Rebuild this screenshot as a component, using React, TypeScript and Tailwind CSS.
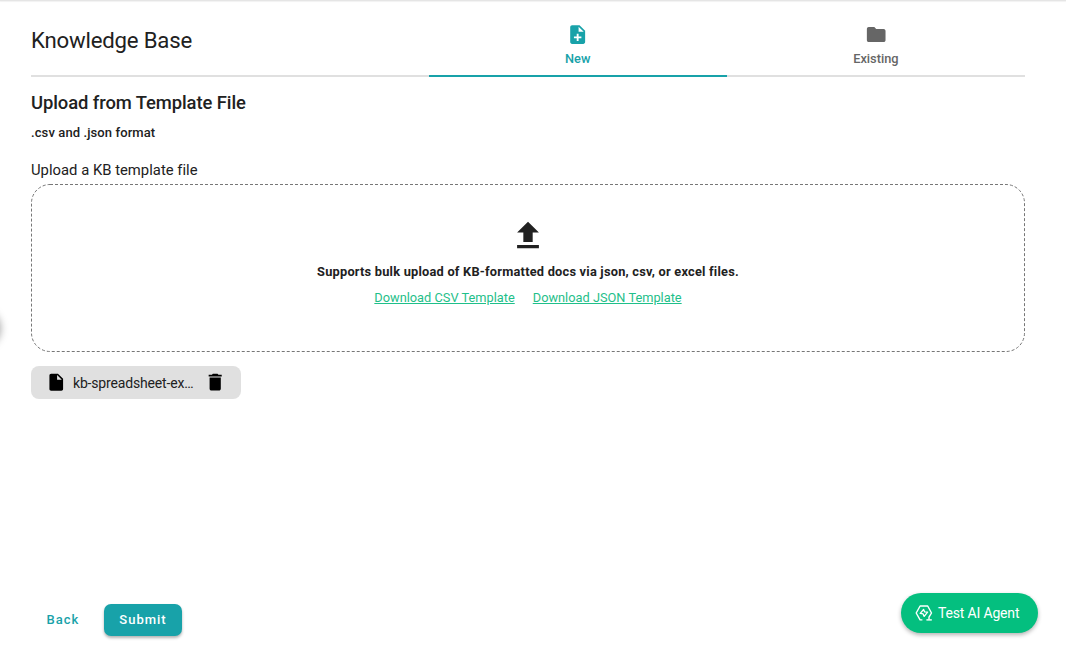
type IconProps = { d: string; className?: string; viewBox?: string };

const Icon = ({ d, className, viewBox = "0 0 24 24" }: IconProps) => (
  <svg viewBox={viewBox} fill="currentColor" className={className} aria-hidden="true">
    <path d={d} />
  </svg>
);

const filePlus =
  "M14 2H6C4.89 2 4 2.89 4 4V20C4 21.11 4.89 22 6 22H18C19.11 22 20 21.11 20 20V8L14 2M16 16H13V19H11V16H8V14H11V11H13V14H16V16M13 9V3.5L18.5 9H13Z";
const folder =
  "M10 4H4C2.89 4 2 4.89 2 6V18C2 19.1 2.9 20 4 20H20C21.1 20 22 19.1 22 18V8C22 6.89 21.1 6 20 6H12L10 4Z";
const upload = "M9 16V10H5L12 3L19 10H15V16H9M5 20V18H19V20H5Z";
const file =
  "M13 9V3.5L18.5 9M6 2C4.89 2 4 2.89 4 4V20C4 21.1 4.9 22 6 22H18C19.1 22 20 21.1 20 20V8L14 2H6Z";
const trash =
  "M19 4H15.5L14.5 3H9.5L8.5 4H5V6H19M6 19C6 20.1 6.9 21 8 21H16C17.1 21 18 20.1 18 19V7H6V19Z";

const AgentIcon = () => (
  <svg viewBox="0 0 18 18" className="h-[18px] w-[18px]" fill="none" stroke="currentColor" strokeWidth="1.4" aria-hidden="true">
    <path d="M7.4 15.9H5.1L1.2 9L5.1 2H12.7L16.5 9L14 13.2V15.6" strokeLinejoin="round" />
    <path d="M11.4 15.9H16.8" />
    <path d="M5.2 9.4L8.6 5.5L9.7 7.9L12.6 8.2L9.2 12.4L8.1 9.9Z" strokeWidth="1.3" strokeLinejoin="round" />
  </svg>
);

export default function App() {
  return (
    <div className="relative flex h-[654px] w-full flex-col overflow-hidden bg-white px-[31px] font-['Roboto',sans-serif] text-[#212121]">
      <div className="absolute inset-x-0 top-0 h-px bg-[#e5e5e5] shadow-[0_1px_1px_#f0f0f0]" />
      <div className="absolute -left-[37px] top-[308px] h-[37px] w-[37px] rounded-full bg-white shadow-[0_2px_8px_rgba(0,0,0,0.4)]" />

      <header className="flex h-[77px] w-[994px] shrink-0">
        <div className="w-[397.6px] border-b-2 border-[#e0e0e0] pt-[25px]">
          <h1 className="text-[22.2px] leading-[31px] tracking-[-0.2px]">Knowledge Base</h1>
        </div>
        <button className="flex w-[298.2px] flex-col items-center border-b-2 border-[#18a2a9] pt-[23.4px] text-[#18a2a9]">
          <Icon d={filePlus} viewBox="-0.5 -0.4 24 24" className="h-[22.4px] w-[22.4px]" />
          <span className="mt-[4.2px] text-[12.8px] font-medium leading-[18px]">New</span>
        </button>
        <button className="flex w-[298.2px] flex-col items-center border-b-2 border-[#e0e0e0] pt-[23.4px] text-[#666]">
          <Icon d={folder} viewBox="0 -0.4 24 24" className="h-[22.4px] w-[22.4px]" />
          <span className="mt-[4.2px] text-[12.8px] font-medium leading-[18px]">Existing</span>
        </button>
      </header>

      <main className="flex w-[994px] flex-col items-start">
        <h2 className="mt-[12px] text-[18.4px] font-medium leading-[28px] tracking-[-0.08px]">Upload from Template File</h2>
        <p className="mt-[6px] text-[13px] font-medium leading-[20px] tracking-[0.1px]">.csv and .json format</p>
        <p className="mt-[17px] text-[14.8px] leading-[20px] tracking-[0.02px]">Upload a KB template file</p>

        <div className="relative mt-[4px] flex h-[168px] w-full flex-col items-center pt-[33px]">
          <svg className="absolute inset-0 h-full w-full" fill="none" aria-hidden="true">
            <rect x="0.5" y="0.5" width="993" height="167" rx="18.5" stroke="#777" strokeDasharray="3 2" />
          </svg>
          <Icon d={upload} viewBox="-0.2 0 24 24" className="h-[37.4px] w-[37.4px]" />
          <p className="mt-[7.6px] text-[12.8px] font-bold leading-[20px] tracking-[0.22px]">
            Supports bulk upload of KB-formatted docs via json, csv, or excel files.
          </p>
          <div className="mt-[6px] flex gap-[18px] text-[12.8px] leading-[20px] text-[#1fc08a]">
            <a className="underline" href="#csv">Download CSV Template</a>
            <a className="underline" href="#json">Download JSON Template</a>
          </div>
        </div>

        <div className="mt-[14px] flex h-[33px] w-[210px] items-center rounded-[8px] bg-[#e0e0e0] pl-[15px]">
          <Icon d={file} className="h-[20.5px] w-[20.5px] text-black" />
          <span className="ml-[6.5px] w-[130.5px] text-[14px] leading-[20px] tracking-[-0.17px]">kb-spreadsheet-ex…</span>
          <Icon d={trash} className="h-[22.4px] w-[22.4px] text-black" />
        </div>
      </main>

      <footer className="mt-auto mb-[18px] flex h-8 items-center text-[13px] font-medium tracking-[1px]">
        <button className="ml-[15.5px] w-[57.5px] text-left text-[#18a2a9]">Back</button>
        <button className="h-8 w-[78px] rounded-[7px] bg-[#18a2a9] text-white shadow-[0_2px_3px_rgba(0,0,0,0.3)]">Submit</button>
      </footer>

      <button className="absolute left-[901px] top-[593px] flex h-10 w-[137px] items-center rounded-full bg-[#04bf7f] pl-[14px] text-[14px] tracking-[-0.17px] text-white shadow-[0_2px_4px_rgba(0,0,0,0.3)]">
        <AgentIcon />
        <span className="ml-[5px]">Test AI Agent</span>
      </button>
    </div>
  );
}
